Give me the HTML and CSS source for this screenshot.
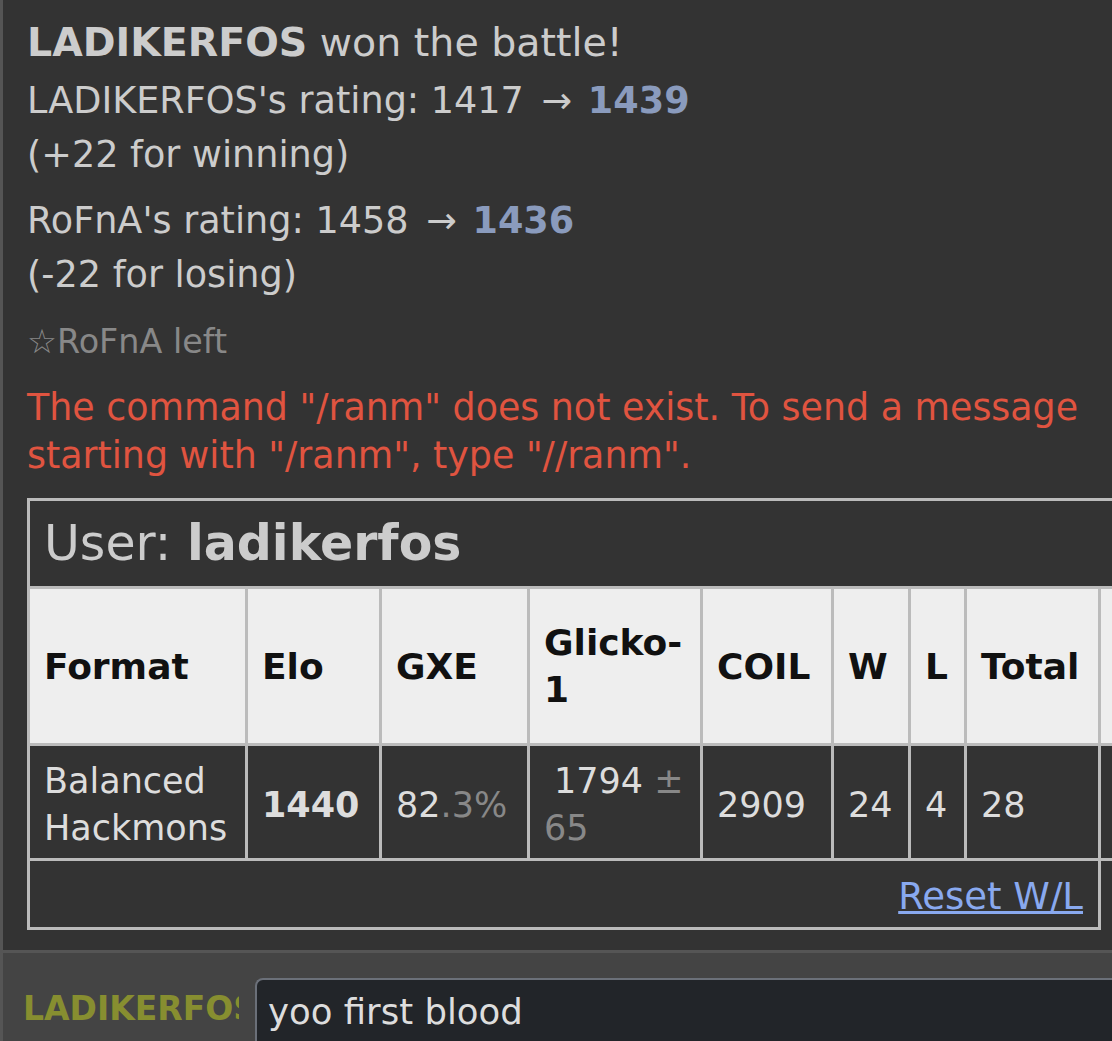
FILE: index.html
```html
<!DOCTYPE html>
<html lang="en">
<head>
<meta charset="utf-8">
<title>Battle chat</title>
<link rel="stylesheet" href="styles.css">
</head>
<body>
<div class="room">
  <div class="log">
    <div class="win"><strong>LADIKERFOS</strong> won the battle!</div>
    <div class="rating">LADIKERFOS's rating: 1417 <span class="arrow">&rarr;</span> <strong>1439</strong><br>(+22 for winning)</div>
    <div class="rating">RoFnA's rating: 1458 <span class="arrow">&rarr;</span> <strong>1436</strong><br>(-22 for losing)</div>
    <div class="leave">&#9734;RoFnA left</div>
    <div class="error">The command "/ranm" does not exist. To send a message starting with "/ranm", type "//ranm".</div>
    <table class="ladder">
      <colgroup>
        <col class="c-format"><col class="c-elo"><col class="c-gxe"><col class="c-glicko"><col class="c-coil"><col class="c-w"><col class="c-l"><col class="c-total"><col class="c-extra">
      </colgroup>
      <tr><th colspan="9" class="user">User: <strong>ladikerfos</strong></th></tr>
      <tr class="head"><th>Format</th><th>Elo</th><th>GXE</th><th>Glicko-1</th><th>COIL</th><th>W</th><th>L</th><th>Total</th><th></th></tr>
      <tr class="row">
        <td>Balanced Hackmons</td>
        <td><strong>1440</strong></td>
        <td>82<span class="dim">.3%</span></td>
        <td class="glicko">1794<span class="dim"> &plusmn; 65</span></td>
        <td>2909</td>
        <td>24</td>
        <td>4</td>
        <td>28</td>
        <td></td>
      </tr>
      <tr><td colspan="8" class="actions"><a href="#">Reset W/L</a></td></tr>
    </table>
  </div>
  <div class="composer">
    <div class="username">LADIKERFOS</div>
    <textarea class="textbox">yoo first blood</textarea>
  </div>
</div>
</body>
</html>
```

FILE: styles.css
```css
html, body {
  margin: 0;
  padding: 0;
  height: 100%;
}

body {
  background: #333;
  font-family: "DejaVu Sans", Verdana, sans-serif;
  overflow: hidden;
}

.room {
  height: 1041px;
  display: flex;
  flex-direction: column;
  border-left: 3px solid #555;
  box-sizing: border-box;
}

.log {
  flex: 1;
  padding: 15px 20px 0 24px;
  color: #ccc;
  overflow: hidden;
  min-height: 0;
}

.win {
  font-size: 39.5px;
  line-height: 54px;
}

.rating {
  font-size: 36.6px;
  line-height: 54px;
  margin-top: 5px;
}

.rating + .rating {
  margin-top: 12px;
}

.rating strong {
  color: #8a9bbd;
}

.arrow {
  margin: 0 4px 0 6px;
}

.leave {
  font-size: 33.4px;
  line-height: 44px;
  margin-top: 18px;
  color: #888;
}

.error {
  font-size: 36.4px;
  line-height: 48px;
  margin-top: 20px;
  color: #e05440;
}

.ladder {
  margin-top: 18px;
  border-collapse: collapse;
  table-layout: fixed;
  width: 1192px;
  font-size: 35px;
  color: #ddd;
}

.ladder th,
.ladder td {
  border: 3px solid #bbb;
  padding: 0 14px;
  text-align: left;
}

.c-format { width: 218px; }
.c-elo { width: 134px; }
.c-gxe { width: 148px; }
.c-glicko { width: 173px; }
.c-coil { width: 131px; }
.c-w { width: 77px; }
.c-l { width: 56px; }
.c-total { width: 134px; }
.c-extra { width: 121px; }

.ladder th.user {
  background: #333;
  color: #ccc;
  font-size: 49px;
  font-weight: normal;
  line-height: 85px;
  white-space: nowrap;
}

.ladder th.user strong {
  font-weight: bold;
}

.head th {
  background: #eee;
  color: #111;
  font-size: 36px;
  font-weight: bold;
  line-height: 47px;
  padding-top: 30px;
  padding-bottom: 30px;
  padding-right: 12px;
  vertical-align: middle;
}

.row td {
  line-height: 47px;
  padding-top: 12px;
  padding-bottom: 6px;
  vertical-align: middle;
}

.row td.glicko {
  text-indent: 10px;
}

.dim {
  color: #888;
}

.ladder td.actions {
  text-align: right;
  font-size: 37px;
  line-height: 60px;
  padding-top: 6px;
  padding-right: 15px;
}

.actions a {
  color: #89a9ef;
}

.composer {
  height: 91px;
  box-sizing: border-box;
  border-top: 3px solid #555;
  background: #444;
  display: flex;
  align-items: flex-start;
  gap: 16px;
  padding: 25px 0 0 20px;
}

.username {
  flex: none;
  width: 216px;
  overflow: hidden;
  white-space: nowrap;
  margin-top: 9px;
  font-size: 33px;
  line-height: 44px;
  font-weight: bold;
  color: #878e30;
}

.textbox {
  flex: 1;
  height: 80px;
  margin: 0;
  box-sizing: border-box;
  resize: none;
  overflow: hidden;
  background: #222529;
  color: #ddd;
  border: 2px solid #6b7079;
  border-right: none;
  border-radius: 8px 0 0 0;
  padding: 8px 11px;
  font-family: "DejaVu Sans", Verdana, sans-serif;
  font-size: 35.5px;
  line-height: 48px;
  outline: none;
}
```
